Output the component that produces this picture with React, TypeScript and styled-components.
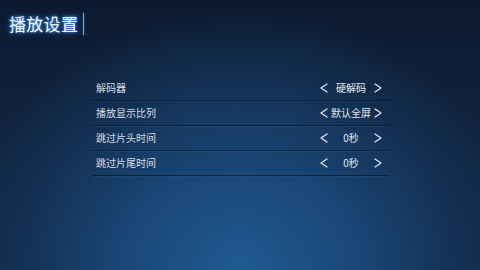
import styled, { createGlobalStyle } from "styled-components";

const GlobalStyle = createGlobalStyle`
	html, body {
		margin: 0;
		padding: 0;
		background: #0e1c33;
	}
	* {
		box-sizing: border-box;
	}
`;

type SettingItem = {
	label: string;
	value: string;
};

const items: SettingItem[] = [
	{ label: "解码器", value: "硬解码" },
	{ label: "播放显示比列", value: "默认全屏" },
	{ label: "跳过片头时间", value: "0秒" },
	{ label: "跳过片尾时间", value: "0秒" },
];

function Chevron(props: { dir: "left" | "right" }) {
	const d = props.dir === "left" ? "M7 1 L1 5 L7 9" : "M1 1 L7 5 L1 9";
	return (
		<ArrowIcon width="8" height="10" viewBox="0 0 8 10">
			<path d={d} fill="none" stroke="#dfe5ee" strokeWidth="1.3" strokeLinecap="round" strokeLinejoin="round" />
		</ArrowIcon>
	);
}

export default function App() {
	return (
		<Screen>
			<GlobalStyle />
			<Header>
				<Title>播放设置</Title>
				<TitleBar />
			</Header>
			<List>
				{items.map((item) => (
					<Row key={item.label}>
						<Label>{item.label}</Label>
						<Picker>
							<Chevron dir="left" />
							<Value>{item.value}</Value>
							<Chevron dir="right" />
						</Picker>
					</Row>
				))}
			</List>
		</Screen>
	);
}

const Screen = styled.div`
	width: 480px;
	height: 270px;
	overflow: hidden;
	display: flex;
	flex-direction: column;
	font-family: "Noto Sans CJK SC", "Noto Sans", sans-serif;
	background:
		radial-gradient(ellipse 62% 95% at 50% 100%, #1f5a91 0%, #1a4676 40%, #132f52 75%, rgba(14, 28, 51, 0) 100%),
		linear-gradient(180deg, #0c1a30 0%, #10223d 50%, #13294a 100%);
`;

const Header = styled.div`
	display: flex;
	align-items: center;
	gap: 5px;
	padding: 11px 0 0 9px;
	height: 37px;
`;

const Title = styled.h1`
	margin: 0;
	font-size: 17px;
	font-weight: 400;
	line-height: 22px;
	color: #f2f8ff;
	letter-spacing: 0.3px;
	text-shadow: 0 0 3px #4aa6ff, 0 0 6px rgba(60, 150, 255, 0.8);
`;

const TitleBar = styled.div`
	width: 1px;
	height: 22px;
	background: #6fa4d6;
	box-shadow: 0 0 3px rgba(90, 160, 230, 0.7);
`;

const List = styled.div`
	display: flex;
	flex-direction: column;
	width: 298px;
	margin: 39px 0 0 92px;
`;

const Row = styled.div`
	display: flex;
	align-items: center;
	justify-content: space-between;
	height: 25px;
	padding: 0 8px 0 4px;
	border-bottom: 1px solid rgba(6, 14, 28, 0.55);
	box-shadow: 0 1px 0 rgba(120, 170, 230, 0.08);
`;

const Label = styled.span`
	font-size: 10px;
	color: #d9dfe8;
	line-height: 12px;
`;

const Picker = styled.div`
	display: flex;
	align-items: center;
	width: 62px;
`;

const ArrowIcon = styled.svg`
	flex: none;
	display: block;
`;

const Value = styled.span`
	flex: 1;
	text-align: center;
	font-size: 10px;
	color: #e4e9f0;
	line-height: 12px;
	white-space: nowrap;
`;
